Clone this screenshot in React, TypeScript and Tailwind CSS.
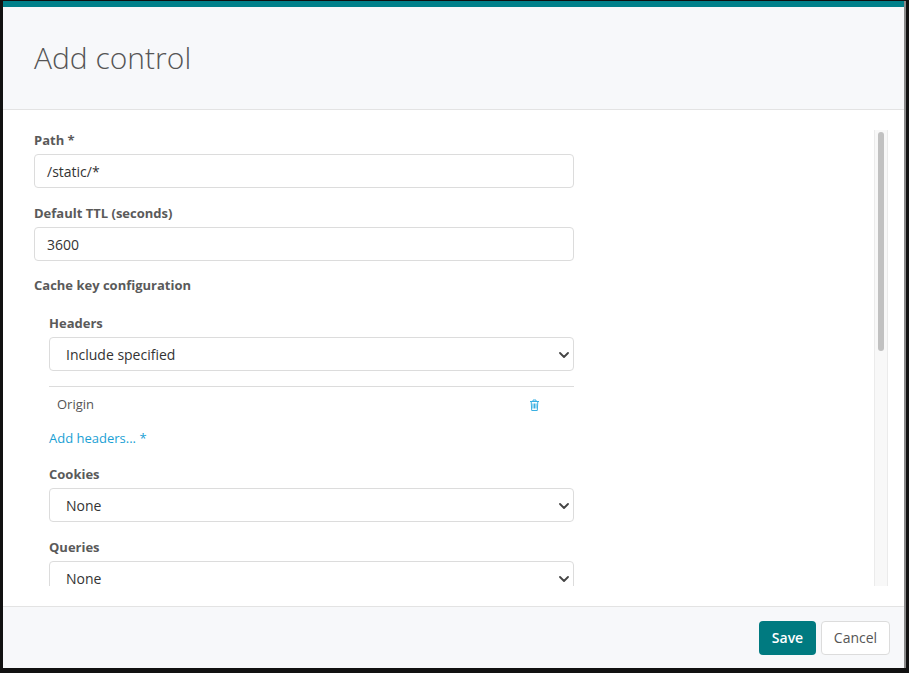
import React from 'react';

const font = { fontFamily: '"Open Sans", "Liberation Sans", sans-serif' };

function Label(props: { children: React.ReactNode }) {
    return (
        <div className="text-[13px] leading-[18px] font-bold text-[#5a5a5a] mb-[5px]">
            {props.children}
        </div>
    );
}

function TextInput(props: { value: string }) {
    return (
        <div className="h-[34px] w-full border border-[#dcdcdc] rounded-[4px] bg-white flex items-center px-[12px] text-[14px] text-[#333]">
            {props.value}
        </div>
    );
}

function Select(props: { value: string }) {
    return (
        <div className="relative h-[34px] w-full border border-[#dcdcdc] rounded-[4px] bg-white flex items-center pl-[16px] text-[14px] text-[#333]">
            {props.value}
            <svg className="absolute right-[4px] top-[14px] w-[10px] h-[6px]" viewBox="0 0 10 6" fill="none">
                <path d="M1 1l4 4 4-4" stroke="#444" strokeWidth={1.8} strokeLinecap="round" strokeLinejoin="round" />
            </svg>
        </div>
    );
}

function TrashIcon() {
    return (
        <svg className="w-[9px] h-[12px]" viewBox="0 0 9 12" fill="none" stroke="#3ab0e2" strokeWidth={1}>
            <path d="M0 2.5h9" />
            <path d="M3 2.5V1h3v1.5" />
            <path d="M1.2 2.5l.5 9h5.6l.5-9" />
            <path d="M3 4.5v5M4.5 4.5v5M6 4.5v5" />
        </svg>
    );
}

export default function App() {
    return (
        <div className="w-[909px] h-[673px] bg-[#111] pl-[3px] pr-[3px] pt-[1px] pb-[5px]" style={font}>
            <div className="h-full flex flex-col bg-white border-r-2 border-[#8a8a8a]">
                <div className="h-[6px] bg-[#00808a] shrink-0" />
                <div className="bg-[#f7f8fa] border-b border-[#e3e3e3] pl-[31px] pt-[33px] pb-[33px] shrink-0">
                    <h1 className="text-[30px] leading-[36px] font-light text-[#555]">Add control</h1>
                </div>
                <div className="flex-1 min-h-0 pt-[20px] pb-[20px] pl-[31px] pr-[16px]">
                    <div className="h-full flex">
                        <div className="flex-1 overflow-hidden">
                            <div className="w-[540px] pt-[1px]">
                                <Label>Path *</Label>
                                <TextInput value="/static/*" />
                                <div className="h-[16px]" />
                                <Label>Default TTL (seconds)</Label>
                                <TextInput value="3600" />
                                <div className="h-[15px]" />
                                <div className="text-[13px] leading-[18px] font-bold text-[#5a5a5a]">Cache key configuration</div>
                                <div className="pl-[15px] pt-[20px]">
                                    <Label>Headers</Label>
                                    <div className="mt-[3px]">
                                        <Select value="Include specified" />
                                    </div>
                                    <div className="mt-[15px] border-t border-[#dcdcdc] h-[37px] flex items-center justify-between pl-[8px] pr-[35px] text-[13px] text-[#555]">
                                        <span>Origin</span>
                                        <TrashIcon />
                                    </div>
                                    <div className="text-[13px] leading-[18px] text-[#1b9fd4] mt-[6px]">Add headers... *</div>
                                    <div className="h-[18px]" />
                                    <Label>Cookies</Label>
                                    <div className="mt-[1px]">
                                        <Select value="None" />
                                    </div>
                                    <div className="h-[16px]" />
                                    <Label>Queries</Label>
                                    <div className="mt-[1px]">
                                        <Select value="None" />
                                    </div>
                                    <div className="h-[40px]" />
                                </div>
                            </div>
                        </div>
                        <div className="w-[14px] shrink-0 bg-[#f8f8f8] border-x border-[#ebebeb] pt-[2px] px-[3px]">
                            <div className="h-[219px] rounded-full bg-[#c1c1c1]" />
                        </div>
                    </div>
                </div>
                <div className="bg-[#f7f8fa] border-t border-[#e3e3e3] h-[62px] shrink-0 flex items-center justify-end gap-[5px] pr-[14px]">
                    <button className="h-[34px] w-[57px] rounded-[4px] bg-[#007a80] text-white text-[14px] font-semibold">
                        Save
                    </button>
                    <button className="h-[34px] w-[69px] rounded-[4px] bg-white border border-[#dcdcdc] text-[#555] text-[14px]">
                        Cancel
                    </button>
                </div>
            </div>
        </div>
    );
}
